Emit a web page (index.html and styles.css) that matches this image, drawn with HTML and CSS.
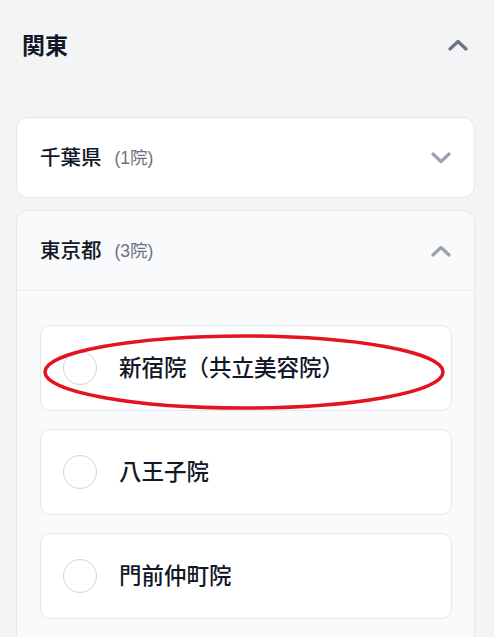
FILE: index.html
```html
<!DOCTYPE html>
<html lang="ja">
<head>
<meta charset="UTF-8" />
<meta name="viewport" content="width=device-width, initial-scale=1.0" />
<title>関東 - 院を選択</title>
<link rel="stylesheet" href="styles.css">
</head>
<body>
<section class="region">
  <div class="region-head">
    <h2>関東</h2>
    <svg class="chev chev-dark" viewBox="0 0 20 12" aria-hidden="true"><path d="M2 10 L10 2.5 L18 10" /></svg>
  </div>

  <div class="pref-list">
    <div class="pref">
      <div class="pref-head">
        <span class="pref-name">千葉県</span><span class="pref-count">(1院)</span>
        <svg class="chev" viewBox="0 0 20 12" aria-hidden="true"><path d="M2 2 L10 9.5 L18 2" /></svg>
      </div>
    </div>

    <div class="pref open">
      <div class="pref-head">
        <span class="pref-name">東京都</span><span class="pref-count">(3院)</span>
        <svg class="chev" viewBox="0 0 20 12" aria-hidden="true"><path d="M2 10 L10 2.5 L18 10" /></svg>
      </div>
      <div class="clinics">
        <label class="clinic marked">
          <span class="radio"></span>
          <span class="clinic-name">新宿院（共立美容院）</span>
          <svg class="mark" viewBox="0 0 404 78" aria-hidden="true"><ellipse cx="202" cy="39" rx="199" ry="36" /></svg>
        </label>
        <label class="clinic">
          <span class="radio"></span>
          <span class="clinic-name">八王子院</span>
        </label>
        <label class="clinic">
          <span class="radio"></span>
          <span class="clinic-name">門前仲町院</span>
        </label>
      </div>
    </div>
  </div>
</section>
</body>
</html>
```

FILE: styles.css
```css
* {
  box-sizing: border-box;
}
body {
  margin: 0;
  background: #f3f4f6;
  color: #111827;
  font-family: "Noto Sans CJK JP", "Noto Sans", sans-serif;
  -webkit-font-smoothing: antialiased;
}
.region-head {
  height: 90px;
  display: flex;
  align-items: center;
  justify-content: space-between;
  padding: 0 26px 0 22px;
}
.region-head h2 {
  margin: 0 0 2px 0;
  font-size: 23px;
  font-weight: 700;
  color: #111827;
}
.chev {
  width: 20px;
  height: 12px;
  fill: none;
  stroke: #9ca3af;
  stroke-width: 3.2;
  stroke-linecap: round;
  stroke-linejoin: round;
}
.chev-dark {
  stroke: #6b7280;
}
.pref-list {
  display: flex;
  flex-direction: column;
  gap: 12px;
  padding: 27px 19px 0 16px;
}
.pref {
  background: #fff;
  border: 1px solid #e5e7eb;
  border-radius: 12px;
}
.pref.open {
  background: #f9fafb;
  border-bottom-left-radius: 0;
  border-bottom-right-radius: 0;
}
.pref-head {
  height: 79px;
  display: flex;
  align-items: center;
  padding: 0 23px;
}
.pref.open .pref-head {
  height: 80px;
  border-bottom: 1px solid #eceef1;
}
.pref-name {
  margin-bottom: 3px;
  font-size: 20.5px;
  font-weight: 500;
}
.pref-count {
  flex: 1;
  margin: 0 0 2px 13px;
  font-family: "Liberation Sans", "Noto Sans CJK JP", sans-serif;
  font-size: 17.5px;
  color: #6b7280;
}
.clinics {
  display: flex;
  flex-direction: column;
  gap: 18px;
  padding: 34px 22px 30px 23px;
}
.clinic {
  position: relative;
  height: 86px;
  display: flex;
  align-items: center;
  gap: 22px;
  padding: 0 22px;
  background: #fff;
  border: 1px solid #e5e7eb;
  border-radius: 10px;
  cursor: pointer;
}
.radio {
  width: 34px;
  height: 34px;
  border-radius: 50%;
  border: 1.5px solid #d1d5db;
  background: #fff;
  flex: none;
}
.clinic-name {
  margin-bottom: 4px;
  font-size: 22.5px;
  font-weight: 500;
}
.mark {
  position: absolute;
  left: 1px;
  top: 7px;
  width: 404px;
  height: 78px;
  fill: none;
  stroke: #e3141f;
  stroke-width: 3.5;
  pointer-events: none;
}
```
